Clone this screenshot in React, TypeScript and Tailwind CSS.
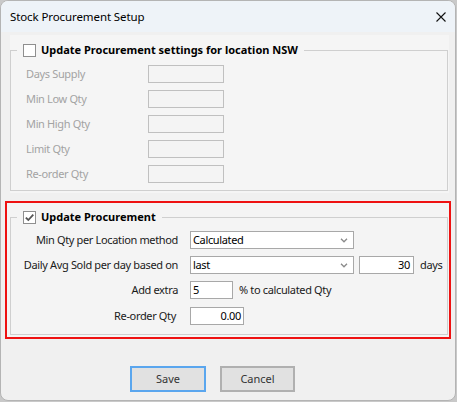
import { ReactNode } from 'react'

function CheckBox({ checked }: { checked?: boolean }) {
  return (
    <span className="inline-flex w-[13px] h-[13px] shrink-0 items-center justify-center border border-[#8f8f8f] bg-white">
      {checked && (
        <svg width="11" height="11" viewBox="0 0 11 11">
          <path d="M1.8 5.6 L4.3 8 L9.3 2.6" fill="none" stroke="#555" strokeWidth="1.8" />
        </svg>
      )}
    </span>
  )
}

function GroupTitle({ checked, children }: { checked?: boolean; children: ReactNode }) {
  return (
    <legend className="ml-[6px] px-[6px] h-[16px] leading-[16px] text-[11px]">
      <span className="flex h-[16px] items-center gap-[5px] font-bold text-black whitespace-nowrap">
        <CheckBox checked={checked} />
        {children}
      </span>
    </legend>
  )
}

function Chevron() {
  return (
    <svg width="8" height="5" viewBox="0 0 8 5" className="shrink-0">
      <path d="M1 0.8 L4 3.8 L7 0.8" fill="none" stroke="#8a8a8a" strokeWidth="1.3" />
    </svg>
  )
}

const disabledRows = ['Days Supply', 'Min Low Qty', 'Min High Qty', 'Limit Qty', 'Re-order Qty']

export default function App() {
  return (
    <div className="w-[457px] h-[402px] bg-[#c9c9c9] font-['Noto_Sans',sans-serif] leading-[16px]">
      <div className="w-[456px] h-[401px] rounded-[8px] border border-[#b4b4b4] bg-[#f0f0f0] overflow-hidden flex flex-col">
        {/* Title bar */}
        <div className="h-[31px] shrink-0 bg-[#eef3f8] flex items-center justify-between pl-[9px] pr-[9px]">
          <span className="text-[11.5px] text-black tracking-[-0.1px]">Stock Procurement Setup</span>
          <svg width="10" height="10" viewBox="0 0 10 10">
            <path d="M0.5 0.5 L9.5 9.5 M9.5 0.5 L0.5 9.5" stroke="#111" strokeWidth="1.1" />
          </svg>
        </div>

        {/* Location group (disabled) */}
        <div className="ml-[9px] mt-[3px] w-[439px] shrink-0 bg-[#f5f5f5] pt-[7px] pr-[1px] pb-[2px]">
          <fieldset className="border border-[#cfcfcf]">
            <GroupTitle>Update Procurement settings for location NSW</GroupTitle>
            <div className="flex flex-col gap-[7px] pl-[15px] pt-[7px] pb-[7px]">
              {disabledRows.map((label) => (
                <div key={label} className="flex items-center h-[18px]">
                  <span className="w-[122px] text-[11px] tracking-[-0.35px] text-[#a3a3a3]">{label}</span>
                  <div className="w-[76px] h-[18px] border border-[#c0c0c0] bg-[#f4f4f4]" />
                </div>
              ))}
            </div>
          </fieldset>
        </div>

        {/* Procurement group (highlighted) */}
        <div className="ml-[4px] mt-[8px] w-[446px] shrink-0 border-2 border-[#ee1111]">
          <div className="bg-[#f4f4f4] pl-[3px] pr-[1px] pt-[6px] pb-[2px]">
            <fieldset className="border border-[#cfcfcf]">
              <GroupTitle checked>Update Procurement</GroupTitle>
              <div className="flex flex-col pt-[6px] pb-[9px] text-[11px] tracking-[-0.35px] text-[#1a1a1a] whitespace-nowrap">
                <div className="flex items-center h-[18px] gap-[12px]">
                  <span className="w-[167px] text-right">Min Qty per Location method</span>
                  <div className="w-[164px] h-[18px] border border-[#a8a8a8] bg-white flex items-center justify-between pl-[2px] pr-[5px]">
                    <span className="text-black">Calculated</span>
                    <Chevron />
                  </div>
                </div>
                <div className="flex items-center h-[18px] gap-[12px] mt-[7px]">
                  <span className="w-[167px] text-right">Daily Avg Sold per day based on</span>
                  <div className="flex items-center">
                    <div className="w-[164px] h-[18px] border border-[#a8a8a8] bg-white flex items-center justify-between pl-[2px] pr-[5px]">
                      <span className="text-black">last</span>
                      <Chevron />
                    </div>
                    <div className="ml-[5px] w-[55px] h-[18px] border border-[#a8a8a8] bg-white flex items-center justify-end pr-[3px] text-black">
                      30
                    </div>
                    <span className="ml-[6px]">days</span>
                  </div>
                </div>
                <div className="flex items-center h-[18px] gap-[12px] mt-[7px]">
                  <span className="w-[167px] text-right">Add extra</span>
                  <div className="flex items-center">
                    <div className="w-[43px] h-[18px] border border-[#a8a8a8] bg-white flex items-center pl-[2px] text-black">
                      5
                    </div>
                    <span className="ml-[6px]">% to calculated Qty</span>
                  </div>
                </div>
                <div className="flex items-center h-[18px] gap-[12px] mt-[8px]">
                  <span className="w-[167px] text-right pr-[2px]">Re-order Qty</span>
                  <div className="w-[54px] h-[18px] border border-[#a8a8a8] bg-white flex items-center justify-end pr-[2px] text-black">
                    0.00
                  </div>
                </div>
              </div>
            </fieldset>
          </div>
        </div>

        {/* Buttons */}
        <div className="flex gap-[14px] ml-[129px] mt-[27px]">
          <button className="w-[76px] h-[26px] border-2 border-[#5aa6ee] bg-[#e1e1e1] text-[11px] text-[#333]">
            Save
          </button>
          <button className="w-[75px] h-[26px] border-2 border-[#b0b0b0] bg-[#e1e1e1] text-[11px] text-[#333]">
            Cancel
          </button>
        </div>
      </div>
    </div>
  )
}
